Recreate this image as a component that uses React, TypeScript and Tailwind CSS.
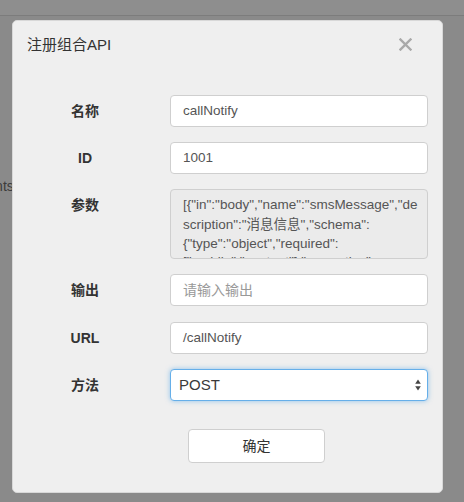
import React from "react";

const font = { fontFamily: '"Liberation Sans", "Noto Sans CJK SC", sans-serif' };

function Label({ children }: { children: React.ReactNode }) {
  return (
    <div className="w-[144px] shrink-0 text-center text-[14px] font-bold leading-[20px] pt-[6px] text-[#333]">
      {children}
    </div>
  );
}

export default function App() {
  return (
    <div className="relative w-[464px] h-[502px] overflow-hidden bg-[#8a8a8a]" style={font}>
      {/* page behind the backdrop */}
      <div className="h-[16px] bg-[#8e8e8e] border-b border-[#7c7c7c]" />
      <div className="mt-[160px] -ml-[29px] text-[14px] leading-[20px] text-[#3c3c3c]">Events</div>

      {/* modal */}
      <div className="absolute left-[12px] top-[20px] w-[431px] h-[473px] rounded-[5px] bg-[#efefef] border border-[#d8d8d8] flex flex-col">
        <div className="h-[47px] flex items-center justify-between pl-[14px] pr-[30px]">
          <div className="text-[15px] text-[#333] leading-[20px]">注册组合API</div>
          <svg width="13" height="13" viewBox="0 0 13 13">
            <path d="M1.5 1.5 L11.5 11.5 M11.5 1.5 L1.5 11.5" stroke="#a9a9a9" strokeWidth="2.4" strokeLinecap="square" />
          </svg>
        </div>

        <div className="mt-[27px] pr-[14px] flex flex-col">
          <div className="flex gap-[13px]">
            <Label>名称</Label>
            <div className="flex-1 h-[32px] rounded-[4px] border border-[#cfcfcf] bg-white flex items-center px-[12px] text-[13.5px] text-[#555]">
              callNotify
            </div>
          </div>

          <div className="flex gap-[13px] mt-[15px]">
            <Label>ID</Label>
            <div className="flex-1 h-[32px] rounded-[4px] border border-[#cfcfcf] bg-white flex items-center px-[12px] text-[13.5px] text-[#555]">
              1001
            </div>
          </div>

          <div className="flex gap-[13px] mt-[15px]">
            <Label>参数</Label>
            <div className="flex-1 h-[70px] overflow-hidden rounded-[4px] border border-[#cfcfcf] bg-[#ebebeb] px-[12px] pt-[5px] text-[13.5px] leading-[19.5px] text-[#555]">
              <div className="whitespace-nowrap">[{"{"}"in":"body","name":"smsMessage","de</div>
              <div className="whitespace-nowrap">scription":"消息信息","schema":</div>
              <div className="whitespace-nowrap">{"{"}"type":"object","required":</div>
              <div className="whitespace-nowrap -mt-[2px]">["mobile","content"],"properties":</div>
            </div>
          </div>

          <div className="flex gap-[13px] mt-[15px]">
            <Label>输出</Label>
            <div className="flex-1 h-[32px] rounded-[4px] border border-[#cfcfcf] bg-white flex items-center px-[12px] text-[14px] text-[#999]">
              请输入输出
            </div>
          </div>

          <div className="flex gap-[13px] mt-[16px]">
            <Label>URL</Label>
            <div className="flex-1 h-[32px] rounded-[4px] border border-[#cfcfcf] bg-white flex items-center px-[12px] text-[13.5px] text-[#555]">
              /callNotify
            </div>
          </div>

          <div className="flex gap-[13px] mt-[15px]">
            <Label>方法</Label>
            <div className="flex-1 h-[32px] rounded-[4px] border border-[#66afe9] shadow-[0_0_5px_rgba(102,175,233,0.7)] bg-white flex items-center justify-between pl-[8px] pr-[6px] text-[15px] text-[#3a3a3a]">
              <span>POST</span>
              <svg width="6" height="12" viewBox="0 0 6 12">
                <path d="M3 0.5 L5.8 4.8 L0.2 4.8 Z" fill="#444" />
                <path d="M3 11.5 L5.8 7.2 L0.2 7.2 Z" fill="#444" />
              </svg>
            </div>
          </div>

          <div className="mt-[28px] ml-[175px]">
            <div className="w-[137px] h-[34px] rounded-[4px] border border-[#cfcfcf] bg-white flex items-center justify-center text-[14px] text-[#333]">
              确定
            </div>
          </div>
        </div>
      </div>
    </div>
  );
}
